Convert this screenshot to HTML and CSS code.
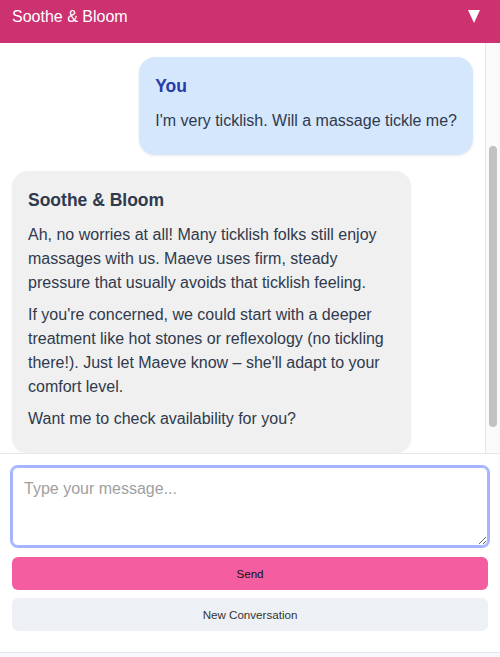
FILE: index.html
```html
<!DOCTYPE html>
<html lang="en">

<head>
  <meta charset="UTF-8">
  <meta name="viewport" content="width=device-width, initial-scale=1.0">
  <title>Soothe &amp; Bloom</title>
  <link rel="stylesheet" href="styles.css">
</head>

<body>
  <div class="widget">
    <div class="header">
      <span class="title">Soothe &amp; Bloom</span>
      <svg class="toggle" width="12" height="13" viewBox="0 0 12 13">
        <polygon points="0,0 12,0 6,13" fill="#fff" />
      </svg>
    </div>

    <div class="chat-body">
      <div class="messages">
        <!-- user -->
        <div class="msg msg-user">
          <h4>You</h4>
          <p>I'm very ticklish. Will a massage tickle me?</p>
        </div>
        <!-- bot -->
        <div class="msg msg-bot">
          <h4>Soothe &amp; Bloom</h4>
          <p>Ah, no worries at all! Many ticklish folks still enjoy massages with us. Maeve uses firm, steady pressure that usually avoids that ticklish feeling.</p>
          <p>If you're concerned, we could start with a deeper treatment like hot stones or reflexology (no tickling there!). Just let Maeve know – she'll adapt to your comfort level.</p>
          <p>Want me to check availability for you?</p>
        </div>
      </div>
      <div class="scrollbar">
        <div class="thumb"></div>
      </div>
    </div>

    <div class="composer">
      <textarea placeholder="Type your message..."></textarea>
      <button class="btn btn-send">Send</button>
      <button class="btn btn-new">New Conversation</button>
    </div>
  </div>
</body>

</html>
```

FILE: styles.css
```css
* {
  padding: 0;
  margin: 0;
  box-sizing: border-box;
}

body {
  background: #f7f8fb;
  font-family: "Liberation Sans", Arial, sans-serif;
  color: #2f3a4d;
}

.widget {
  display: flex;
  flex-direction: column;
  width: 500px;
  height: 653px;
  background: #fff;
  border-bottom: 1px solid #e3e6f0;
}

.header {
  display: flex;
  justify-content: space-between;
  align-items: flex-start;
  height: 43px;
  padding: 7px 20px 0 12px;
  background: #cc3170;
  color: #fff;
}

.header .title {
  font-size: 16px;
  line-height: 19px;
}

.header .toggle {
  margin-top: 3px;
}

.chat-body {
  display: flex;
  height: 410px;
}

.messages {
  flex: 1;
  display: flex;
  flex-direction: column;
  gap: 16px;
  padding: 14px 12px 0 12px;
  overflow: hidden;
}

.msg {
  padding: 16px 16px 14px 16px;
  border-radius: 16px;
  font-size: 16px;
  line-height: 24px;
  flex-shrink: 0;
}

.msg h4 {
  font-size: 17.5px;
  line-height: 27px;
  font-weight: bold;
  margin-bottom: 9px;
}

.msg p {
  margin-bottom: 8px;
}

.msg-user {
  align-self: flex-end;
  background: #d5e7fd;
  box-shadow: 0 1px 3px rgba(0, 0, 0, 0.08);
}

.msg-user h4 {
  color: #283ca8;
}

.msg-bot {
  align-self: flex-start;
  width: 399px;
  background: #f0f0f0;
  box-shadow: 0 1px 3px rgba(0, 0, 0, 0.05);
}

.scrollbar {
  width: 15px;
  padding: 103px 3px 0 3px;
  background: #fafafa;
  border-left: 1px solid #e8e8e8;
}

.scrollbar .thumb {
  width: 8px;
  height: 281px;
  border-radius: 4px;
  background: #c2c2c2;
}

.composer {
  display: flex;
  flex-direction: column;
  padding: 13px 12px 0 12px;
  border-top: 1px solid #e5e7eb;
}

.composer textarea {
  height: 79px;
  padding: 11px 11px;
  margin-bottom: 11px;
  border: 1px solid #a5b4fc;
  outline: 2px solid #a5b4fc;
  border-radius: 6px;
  font-family: "Liberation Sans", Arial, sans-serif;
  font-size: 16px;
  line-height: 20px;
  color: #2d3748;
  resize: vertical;
}

.composer textarea::placeholder {
  color: #a0a0a0;
}

.btn {
  height: 33px;
  padding-bottom: 1px;
  border: none;
  border-radius: 6px;
  font-family: "Liberation Sans", Arial, sans-serif;
  font-size: 11.6px;
}

.btn-send {
  background: #f45ea1;
  color: #111;
  margin-bottom: 8px;
}

.btn-new {
  background: #edf0f5;
  color: #333;
}
```
